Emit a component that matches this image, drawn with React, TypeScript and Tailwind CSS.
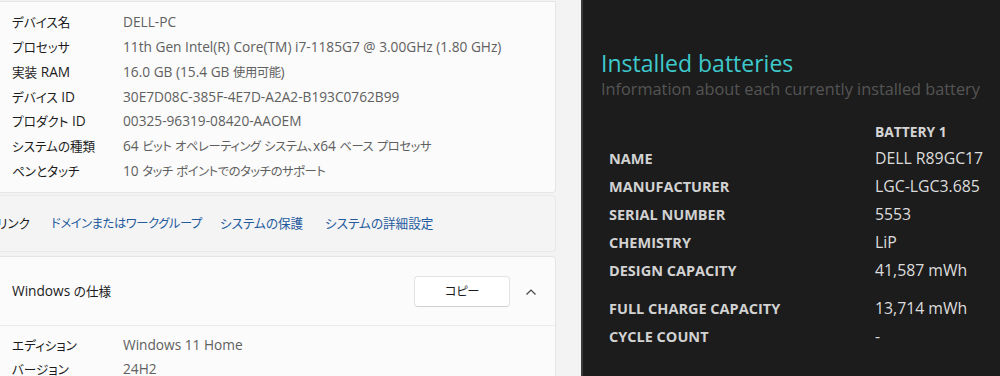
import React from "react";

const jp = { fontFamily: '"Open Sans", "Noto Sans CJK JP", sans-serif' };
const en = { fontFamily: '"Open Sans", "Noto Sans", sans-serif' };

const cjkRe = /([\u3000-\u30ff\u4e00-\u9fff\uff00-\uffef]+)/;

function T({ s, tight }: { s: string; tight?: boolean }) {
  const parts = s.split(cjkRe);
  return (
    <>
      {parts.map((p, i) =>
        p === "" ? null : cjkRe.test(p) ? (
          <span
            key={i}
            className={
              tight
                ? "text-[12.3px] tracking-[-0.4px] [font-feature-settings:'palt']"
                : "text-[12.6px] [font-feature-settings:'palt']"
            }
            style={{ fontFamily: '"Noto Sans CJK JP", sans-serif' }}
          >
            {p}
          </span>
        ) : (
          <span key={i}>{p}</span>
        )
      )}
    </>
  );
}

const specs: [string, string][] = [
  ["デバイス名", "DELL-PC"],
  ["プロセッサ", "11th Gen Intel(R) Core(TM) i7-1185G7 @ 3.00GHz (1.80 GHz)"],
  ["実装 RAM", "16.0 GB (15.4 GB 使用可能)"],
  ["デバイス ID", "30E7D08C-385F-4E7D-A2A2-B193C0762B99"],
  ["プロダクト ID", "00325-96319-08420-AAOEM"],
  ["システムの種類", "64 ビット オペレーティング システム、x64 ベース プロセッサ"],
  ["ペンとタッチ", "10 タッチ ポイントでのタッチのサポート"],
];

const battery: [string, string, boolean?][] = [
  ["NAME", "DELL R89GC17"],
  ["MANUFACTURER", "LGC-LGC3.685"],
  ["SERIAL NUMBER", "5553"],
  ["CHEMISTRY", "LiP"],
  ["DESIGN CAPACITY", "41,587 mWh", true],
  ["FULL CHARGE CAPACITY", "13,714 mWh"],
  ["CYCLE COUNT", "-"],
];

export default function App() {
  return (
    <div className="flex w-[1000px] h-[376px] overflow-hidden bg-[#f3f3f3]">
      <div className="w-[581px] shrink-0 flex flex-col pr-[25px] pt-px whitespace-nowrap text-[13.7px]" style={jp}>
        <div className="shrink-0 bg-[#fbfbfb] border border-l-0 border-[#e5e5e5] rounded-br-[4px] pt-[8px] pb-[8px]">
          {specs.map(([k, v]) => (
            <div key={k} className="flex h-[24.8px] items-center">
              <div className="w-[123px] pl-[12px] text-[#1b1b1b]">
                <T s={k} />
              </div>
              <div className="text-[#606060]">
                <T s={v} tight />
              </div>
            </div>
          ))}
        </div>
        <div className="shrink-0 mt-[2px] h-[57px] bg-[#f4f4f4] border border-l-0 border-[#e9e9e9] rounded-r-[4px] flex items-center">
          <div className="w-[51px] shrink-0 flex justify-end pr-[21px] text-[#1b1b1b] overflow-visible">
            <span className="shrink-0">
              <T s="リンク" />
            </span>
          </div>
          <div className="text-[#235a9e] w-[169px] shrink-0">
            <T s="ドメインまたはワークグループ" tight />
          </div>
          <div className="text-[#235a9e] w-[105px] shrink-0">
            <T s="システムの保護" />
          </div>
          <div className="text-[#235a9e]">
            <T s="システムの詳細設定" />
          </div>
        </div>
        <div className="shrink-0 mt-[4px] h-[140px] bg-[#fbfbfb] border border-l-0 border-b-0 border-[#e5e5e5] rounded-tr-[4px]">
          <div className="h-[69px] flex items-center border-b border-[#ebebeb] pt-[2px]">
            <div className="pl-[12px] text-[#1b1b1b] flex-1">
              <T s="Windows の仕様" />
            </div>
            <div className="w-[96px] h-[31px] rounded-[4px] bg-white border border-[#e3e3e3] border-b-[#d0d0d0] flex items-center justify-center text-[#1b1b1b]">
              <T s="コピー" tight />
            </div>
            <div className="w-[45px] flex justify-center pr-[3px]">
              <svg width="12" height="8" viewBox="0 0 12 8">
                <polyline points="1.5,6.5 6,2 10.5,6.5" fill="none" stroke="#444" strokeWidth="1.2" />
              </svg>
            </div>
          </div>
          <div className="pt-[8px]">
            {[
              ["エディション", "Windows 11 Home"],
              ["バージョン", "24H2"],
            ].map(([k, v]) => (
              <div key={k} className="flex h-[24px] items-center">
                <div className="w-[123px] pl-[12px] text-[#1b1b1b]">
                  <T s={k} />
                </div>
                <div className="text-[#606060]">
                  <T s={v} tight />
                </div>
              </div>
            ))}
          </div>
        </div>
      </div>
      <div className="w-[2px] bg-[#3a3a3a] shrink-0" />
      <div className="flex-1 bg-[#1c1c1c] pl-[18px] pt-[46px]" style={en}>
        <div className="text-[23px] leading-[34px] text-[#3ec9cc]">Installed batteries</div>
        <div className="text-[16.3px] leading-[22px] text-[#555555] -mt-[2px] whitespace-nowrap">
          Information about each currently installed battery
        </div>
        <div className="pl-[8px] mt-[19px]">
          <div className="flex h-[26px] items-center">
            <div className="w-[266px]" />
            <div className="text-[13.8px] font-bold text-[#d4d4d4]">BATTERY 1</div>
          </div>
          {battery.map(([k, v, gap]) => (
            <div key={k} className={`flex items-center ${gap ? "h-[37.5px] pb-[9px]" : "h-[28px]"}`}>
              <div className="w-[266px] text-[14.5px] font-bold text-[#d2d2d2]">{k}</div>
              <div className="text-[15.8px] text-[#dcdcdc]">{v}</div>
            </div>
          ))}
        </div>
      </div>
    </div>
  );
}
